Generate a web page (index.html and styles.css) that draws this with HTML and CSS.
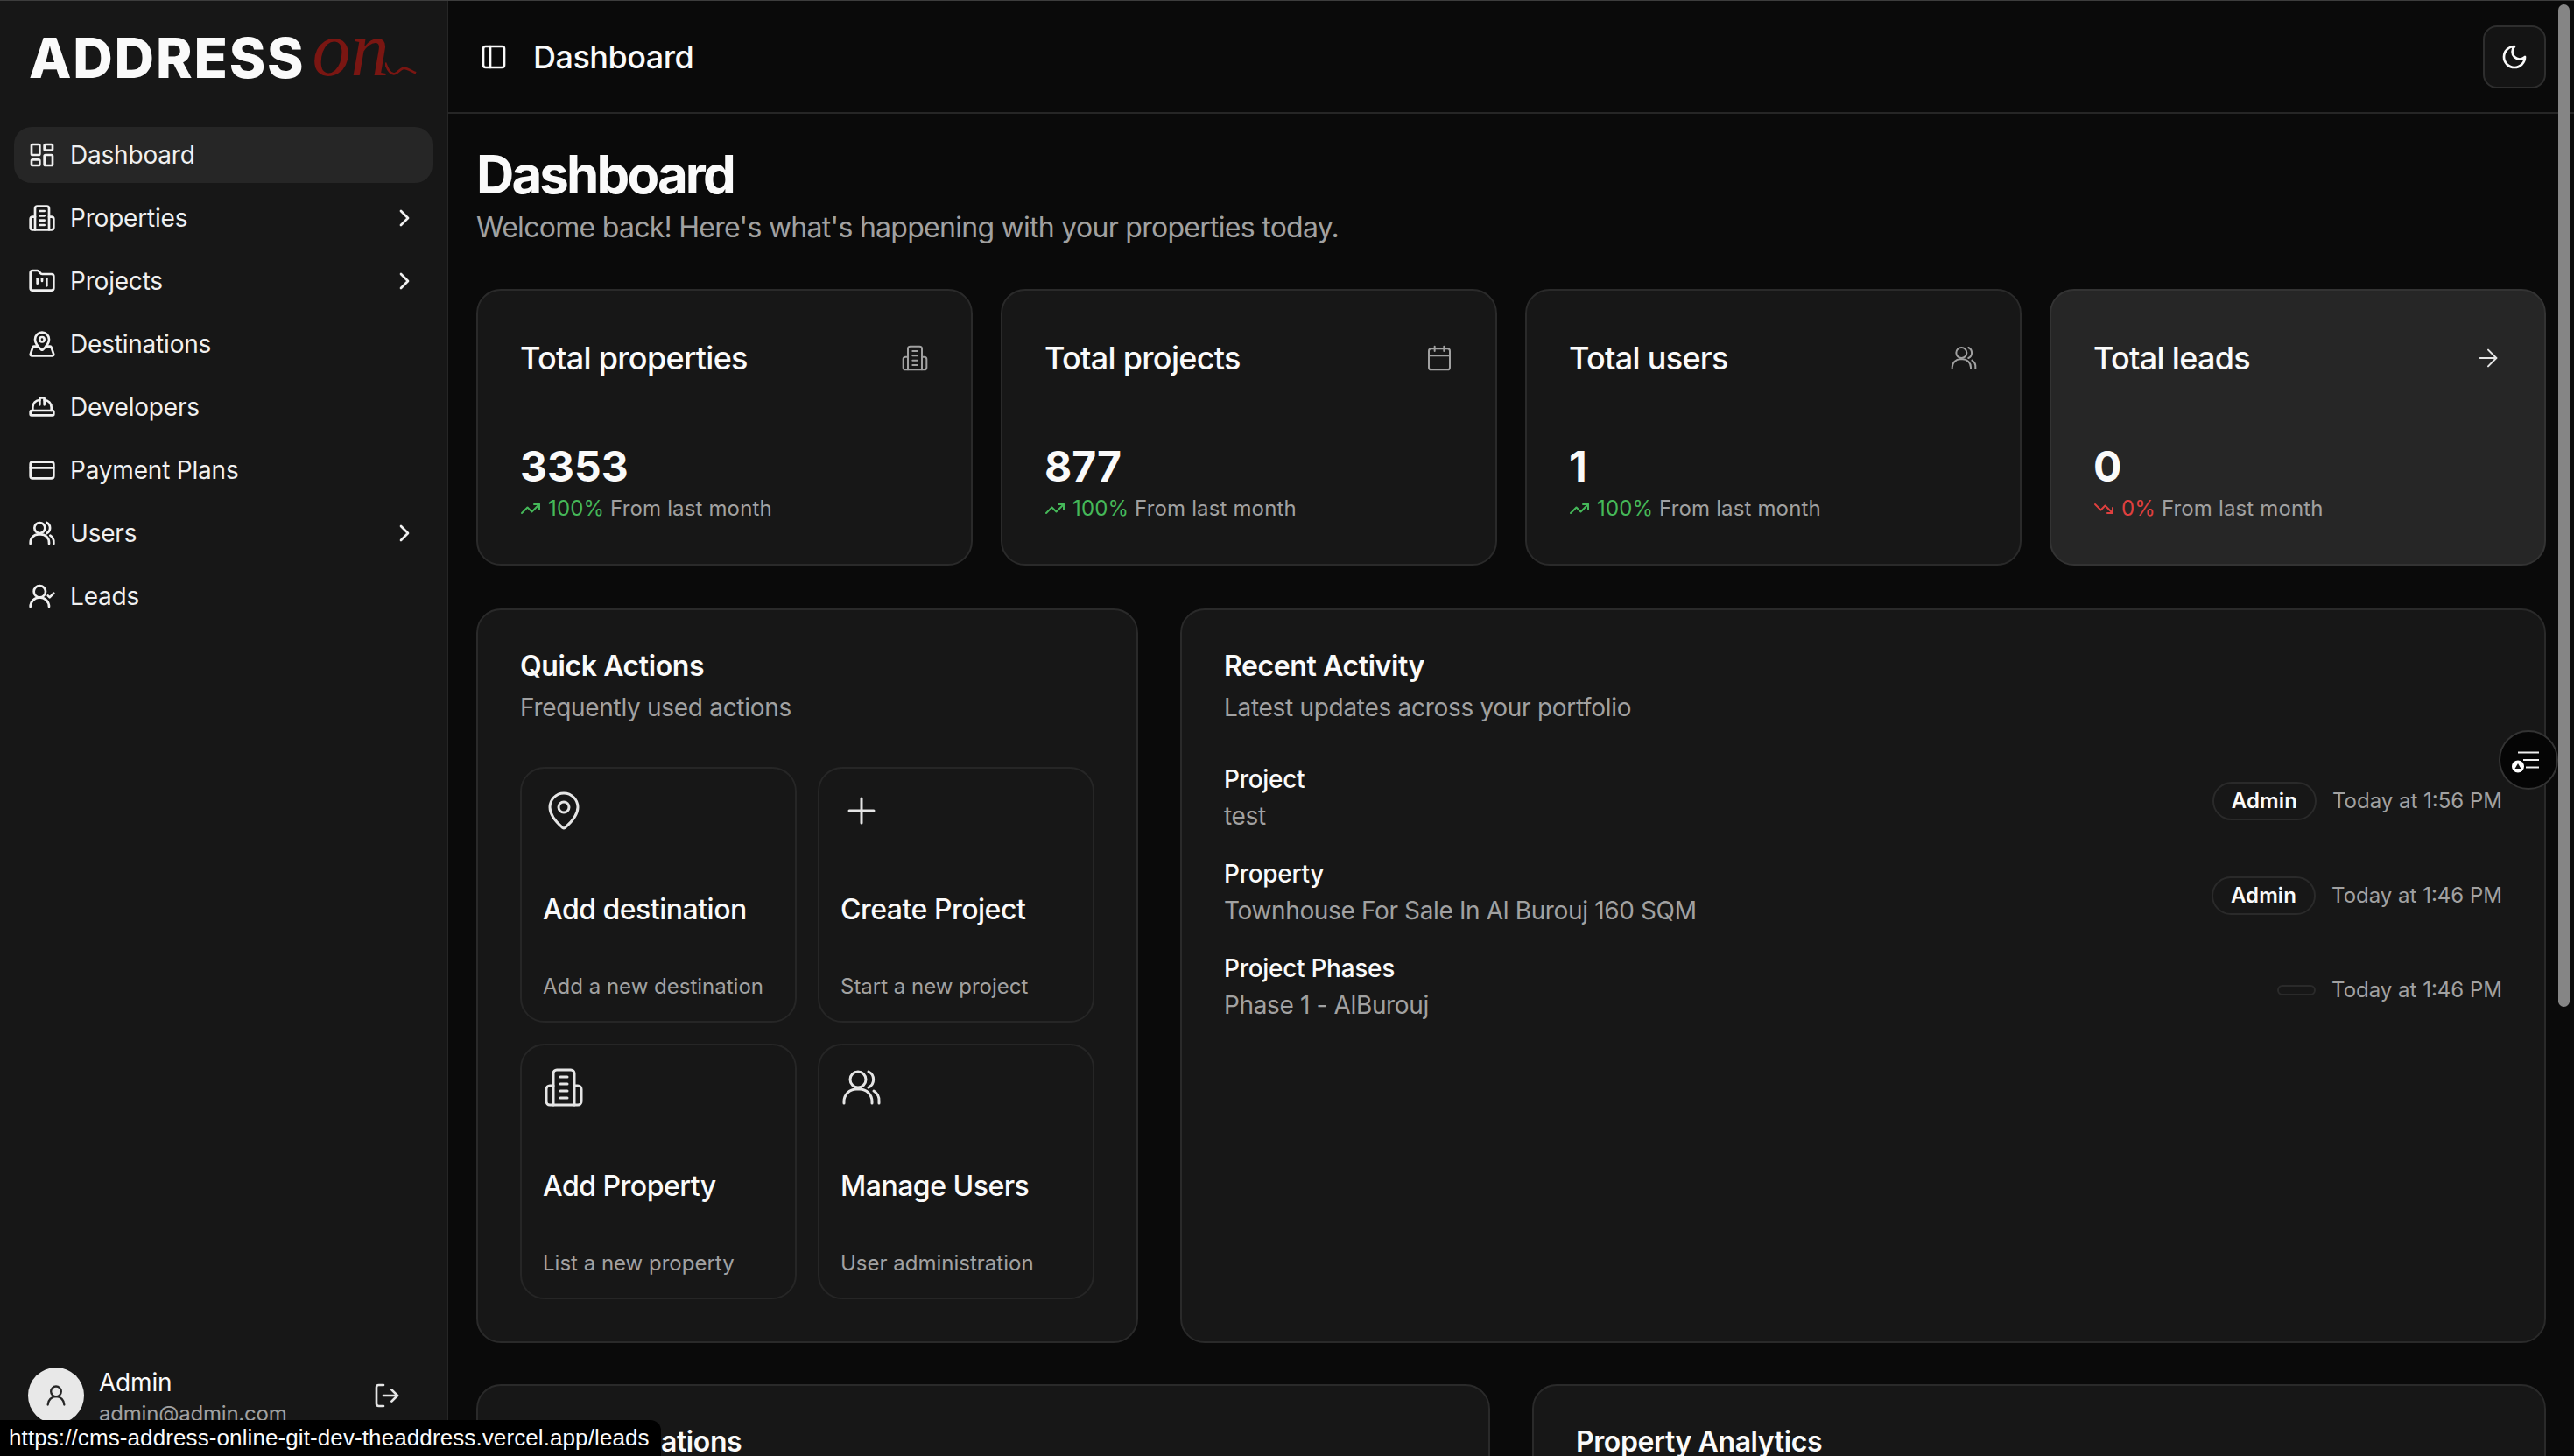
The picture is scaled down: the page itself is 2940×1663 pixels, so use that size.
FILE: index.html
```html
<!DOCTYPE html>
<html lang="en">
<head>
    <meta charset="UTF-8">
    <meta name="viewport" content="width=device-width, initial-scale=1.0">
    <title>Dashboard</title>
    <link rel="stylesheet" href="styles.css">
</head>
<body>

<svg class="icon-defs" width="0" height="0">
    <symbol id="i-dashboard" viewBox="0 0 24 24"><rect x="3" y="3" width="7" height="9" rx="1"/><rect x="14" y="3" width="7" height="5" rx="1"/><rect x="14" y="12" width="7" height="9" rx="1"/><rect x="3" y="16" width="7" height="5" rx="1"/></symbol>
    <symbol id="i-building" viewBox="0 0 24 24"><path d="M6 22V4a2 2 0 0 1 2-2h8a2 2 0 0 1 2 2v18Z"/><path d="M6 11H4a2 2 0 0 0-2 2v7a2 2 0 0 0 2 2h2"/><path d="M18 11h2a2 2 0 0 1 2 2v7a2 2 0 0 1-2 2h-2"/><path d="M10 6h4"/><path d="M10 10h4"/><path d="M10 14h4"/><path d="M10 18h4"/></symbol>
    <symbol id="i-folder" viewBox="0 0 24 24"><path d="M4 20h16a2 2 0 0 0 2-2V8a2 2 0 0 0-2-2h-7.93a2 2 0 0 1-1.66-.9l-.82-1.2A2 2 0 0 0 7.93 3H4a2 2 0 0 0-2 2v13c0 1.1.9 2 2 2Z"/><path d="M8 10v4"/><path d="M12 10v2"/><path d="M16 10v6"/></symbol>
    <symbol id="i-map" viewBox="0 0 24 24"><path d="M18 8c0 3.613-3.869 7.429-5.393 8.795a1 1 0 0 1-1.214 0C9.87 15.429 6 11.613 6 8a6 6 0 0 1 12 0"/><circle cx="12" cy="8" r="2"/><path d="M8.714 14h-3.71a1 1 0 0 0-.948.683l-2.004 6A1 1 0 0 0 3 22h18a1 1 0 0 0 .948-1.316l-2-6a1 1 0 0 0-.949-.684h-3.712"/></symbol>
    <symbol id="i-hat" viewBox="0 0 24 24"><path d="M10 10V5a1 1 0 0 1 1-1h2a1 1 0 0 1 1 1v5"/><path d="M14 6a6 6 0 0 1 6 6v3"/><path d="M4 15v-3a6 6 0 0 1 6-6"/><rect x="2" y="15" width="20" height="4" rx="1"/></symbol>
    <symbol id="i-card" viewBox="0 0 24 24"><rect x="2" y="5" width="20" height="14" rx="2"/><line x1="2" y1="10" x2="22" y2="10"/></symbol>
    <symbol id="i-users" viewBox="0 0 24 24"><path d="M2 21v-1a7 7 0 0 1 7-7h2a7 7 0 0 1 7 7v1"/><circle cx="10" cy="7.5" r="4.5"/><path d="M16 3a5 5 0 0 1 0 9"/><path d="M19 14a6.500 6.500 0 0 1 3 6v1"/></symbol>
    <symbol id="i-user-check" viewBox="0 0 24 24"><path d="M2 21a8 8 0 0 1 16 0"/><circle cx="10" cy="8" r="5"/><path d="m17 11.500 1.500 1.500 3.500-3.500"/></symbol>
    <symbol id="i-chevron" viewBox="0 0 24 24"><path d="m9 18 6-6-6-6"/></symbol>
    <symbol id="i-panel" viewBox="0 0 24 24"><rect x="3" y="3" width="18" height="18" rx="2"/><path d="M9 3v18"/></symbol>
    <symbol id="i-moon" viewBox="0 0 24 24"><path d="M12 3a6 6 0 0 0 9 9 9 9 0 1 1-9-9Z"/></symbol>
    <symbol id="i-calendar" viewBox="0 0 24 24"><path d="M8 2v4"/><path d="M16 2v4"/><rect x="3" y="4" width="18" height="18" rx="2"/><path d="M3 10h18"/></symbol>
    <symbol id="i-arrow" viewBox="0 0 24 24"><path d="M5 12h14"/><path d="m12 5 7 7-7 7"/></symbol>
    <symbol id="i-up" viewBox="0 0 24 24"><path d="M22 7 13.500 15.500 8.500 10.500 2 17"/><path d="M16 7h6v6"/></symbol>
    <symbol id="i-down" viewBox="0 0 24 24"><path d="M22 17 13.500 8.500 8.500 13.500 2 7"/><path d="M16 17h6v-6"/></symbol>
    <symbol id="i-pin" viewBox="0 0 24 24"><path d="M20 10c0 4.993-5.539 10.193-7.399 11.799a1 1 0 0 1-1.202 0C9.539 20.193 4 14.993 4 10a8 8 0 0 1 16 0"/><circle cx="12" cy="10" r="3"/></symbol>
    <symbol id="i-plus" viewBox="0 0 24 24"><path d="M5 12h14"/><path d="M12 5v14"/></symbol>
    <symbol id="i-logout" viewBox="0 0 24 24"><path d="M9 21H5a2 2 0 0 1-2-2V5a2 2 0 0 1 2-2h4"/><path d="m16 17 5-5-5-5"/><path d="M21 12H9"/></symbol>
    <symbol id="i-user" viewBox="0 0 24 24"><circle cx="12" cy="8" r="5"/><path d="M20 21a8 8 0 0 0-16 0"/></symbol>
</svg>

<div class="app">
    <aside class="sidebar">
        <div class="logo">
            <span class="logo-word">ADDRESS</span>
            <span class="logo-on">on</span>
            <svg class="logo-tail" viewBox="0 0 40 24"><path d="M0 6c3 9 7 15 12 14 5-1 6-6 11-7 5-1 10 4 16 6"/></svg>
        </div>

        <nav class="nav">
            <a class="nav-item active"><svg class="icon"><use href="#i-dashboard"/></svg><span>Dashboard</span></a>
            <a class="nav-item"><svg class="icon"><use href="#i-building"/></svg><span>Properties</span><svg class="icon chevron"><use href="#i-chevron"/></svg></a>
            <a class="nav-item"><svg class="icon"><use href="#i-folder"/></svg><span>Projects</span><svg class="icon chevron"><use href="#i-chevron"/></svg></a>
            <a class="nav-item"><svg class="icon"><use href="#i-map"/></svg><span>Destinations</span></a>
            <a class="nav-item"><svg class="icon"><use href="#i-hat"/></svg><span>Developers</span></a>
            <a class="nav-item"><svg class="icon"><use href="#i-card"/></svg><span>Payment Plans</span></a>
            <a class="nav-item"><svg class="icon"><use href="#i-users"/></svg><span>Users</span><svg class="icon chevron"><use href="#i-chevron"/></svg></a>
            <a class="nav-item"><svg class="icon"><use href="#i-user-check"/></svg><span>Leads</span></a>
        </nav>

        <div class="user-box">
            <div class="avatar"><svg class="icon"><use href="#i-user"/></svg></div>
            <div class="user-text">
                <div class="user-name">Admin</div>
                <div class="user-mail">admin@admin.com</div>
            </div>
            <svg class="icon logout"><use href="#i-logout"/></svg>
        </div>
    </aside>

    <main class="main">
        <header class="topbar">
            <svg class="icon"><use href="#i-panel"/></svg>
            <div class="topbar-title">Dashboard</div>
            <button class="theme-btn"><svg class="icon"><use href="#i-moon"/></svg></button>
        </header>

        <div class="content">
            <h1 class="page-title">Dashboard</h1>
            <p class="page-sub">Welcome back! Here's what's happening with your properties today.</p>

            <section class="stats">
                <div class="stat-card">
                    <div class="stat-head"><span>Total properties</span><svg class="icon"><use href="#i-building"/></svg></div>
                    <div class="stat-value">3353</div>
                    <div class="stat-note"><svg class="icon-sm good"><use href="#i-up"/></svg><span class="good">100%</span> From last month</div>
                </div>
                <div class="stat-card">
                    <div class="stat-head"><span>Total projects</span><svg class="icon"><use href="#i-calendar"/></svg></div>
                    <div class="stat-value">877</div>
                    <div class="stat-note"><svg class="icon-sm good"><use href="#i-up"/></svg><span class="good">100%</span> From last month</div>
                </div>
                <div class="stat-card">
                    <div class="stat-head"><span>Total users</span><svg class="icon"><use href="#i-users"/></svg></div>
                    <div class="stat-value">1</div>
                    <div class="stat-note"><svg class="icon-sm good"><use href="#i-up"/></svg><span class="good">100%</span> From last month</div>
                </div>
                <div class="stat-card hovered">
                    <div class="stat-head"><span>Total leads</span><svg class="icon arrow"><use href="#i-arrow"/></svg></div>
                    <div class="stat-value">0</div>
                    <div class="stat-note"><svg class="icon-sm bad"><use href="#i-down"/></svg><span class="bad">0%</span> From last month</div>
                </div>
            </section>

            <section class="panels">
                <div class="panel">
                    <h2 class="panel-title">Quick Actions</h2>
                    <p class="panel-sub">Frequently used actions</p>
                    <div class="actions">
                        <div class="action"><svg class="icon-lg"><use href="#i-pin"/></svg><div class="action-title">Add destination</div><div class="action-sub">Add a new destination</div></div>
                        <div class="action"><svg class="icon-lg"><use href="#i-plus"/></svg><div class="action-title">Create Project</div><div class="action-sub">Start a new project</div></div>
                        <div class="action"><svg class="icon-lg"><use href="#i-building"/></svg><div class="action-title">Add Property</div><div class="action-sub">List a new property</div></div>
                        <div class="action"><svg class="icon-lg"><use href="#i-users"/></svg><div class="action-title">Manage Users</div><div class="action-sub">User administration</div></div>
                    </div>
                </div>

                <div class="panel wide">
                    <h2 class="panel-title">Recent Activity</h2>
                    <p class="panel-sub">Latest updates across your portfolio</p>
                    <div class="activity">
                        <div class="row">
                            <div><div class="row-label">Project</div><div class="row-sub">test</div></div>
                            <div class="row-meta"><span class="badge">Admin</span><span class="row-time">Today at 1:56 PM</span></div>
                        </div>
                        <div class="row">
                            <div><div class="row-label">Property</div><div class="row-sub">Townhouse For Sale In Al Burouj 160 SQM</div></div>
                            <div class="row-meta"><span class="badge">Admin</span><span class="row-time">Today at 1:46 PM</span></div>
                        </div>
                        <div class="row">
                            <div><div class="row-label">Project Phases</div><div class="row-sub">Phase 1 - AlBurouj</div></div>
                            <div class="row-meta"><span class="badge empty"></span><span class="row-time">Today at 1:46 PM</span></div>
                        </div>
                    </div>
                </div>
            </section>

            <section class="bottom">
                <div class="panel"><h2 class="panel-title">Top Destinations</h2></div>
                <div class="panel"><h2 class="panel-title">Property Analytics</h2></div>
            </section>
        </div>
    </main>
</div>

<!-- overlays -->
<div class="scroll-thumb"></div>
<button class="float-btn">
    <svg viewBox="0 0 34 30" width="34" height="30">
        <path class="float-lines" d="M8 6.500h24M14 15h18M17 23.500h15"/>
        <circle class="float-dot" cx="8" cy="22.500" r="7"/>
        <path class="float-tri" d="M8 19l3.500 6h-7z"/>
    </svg>
</button>
<div class="status-link">https://cms-address-online-git-dev-theaddress.vercel.app/leads</div>

</body>
</html>
```

FILE: styles.css
```css
* {
    box-sizing: border-box;
}
html, body {
    margin: 0;
    height: 1663px;
    overflow: hidden;
}
body {
    font-family: Inter, "Noto Sans", sans-serif;
    background-color: #0a0a0a;
    color: #fafafa;
    border-top: 1px solid #3d3d3d;
    position: relative;
}
h1, h2, p {
    margin: 0;
}
.icon-defs {
    position: absolute;
}
.icon, .icon-sm, .icon-lg {
    fill: none;
    stroke: currentColor;
    stroke-width: 2;
    stroke-linecap: round;
    stroke-linejoin: round;
    flex-shrink: 0;
}
.icon {
    width: 32px;
    height: 32px;
}
.icon-sm {
    width: 24px;
    height: 24px;
}
.icon-lg {
    width: 48px;
    height: 48px;
    stroke-width: 1.5;
    color: #e5e5e5;
    display: block;
}
.app {
    display: flex;
    height: 1662px;
}

/* sidebar */
.sidebar {
    width: 512px;
    flex-shrink: 0;
    background-color: #171717;
    border-right: 2px solid #262626;
    display: flex;
    flex-direction: column;
    padding: 0 16px 30px;
}
.logo {
    height: 144px;
    display: flex;
    align-items: center;
    padding: 0 0 14px 17px;
}
.logo-word {
    font-size: 63px;
    font-weight: 800;
    letter-spacing: 1.8px;
    line-height: 1;
}
.logo-on {
    font-family: "Liberation Serif", serif;
    font-style: italic;
    font-size: 88px;
    line-height: 1;
    color: #7a1612;
    margin: -18px 0 0 8px;
}
.logo-tail {
    width: 36px;
    height: 22px;
    margin: 22px 0 0 -4px;
    fill: none;
    stroke: #7a1612;
    stroke-width: 3;
}
.nav {
    display: flex;
    flex-direction: column;
    gap: 8px;
}
.nav-item {
    display: flex;
    align-items: center;
    gap: 16px;
    height: 64px;
    padding: 0 16px;
    border-radius: 20px;
    font-size: 28px;
    letter-spacing: -0.2px;
    color: #f0f0f0;
}
.nav-item.active {
    background-color: #262626;
}
.chevron {
    margin-left: auto;
}
.user-box {
    margin-top: auto;
    display: flex;
    align-items: center;
    padding-left: 16px;
}
.avatar {
    width: 64px;
    height: 64px;
    border-radius: 50%;
    background-color: #e8e8e8;
    color: #262626;
    display: flex;
    align-items: center;
    justify-content: center;
}
.avatar .icon {
    width: 28px;
    height: 28px;
}
.user-text {
    margin: 6px 0 0 17px;
    letter-spacing: -0.2px;
}
.user-name {
    font-size: 28px;
    line-height: 36px;
}
.user-mail {
    font-size: 24px;
    line-height: 36px;
    color: #a1a1a1;
}
.logout {
    margin-left: auto;
    margin-right: 36px;
    color: #e5e5e5;
}

/* main area */
.main {
    flex: 1;
    min-width: 0;
}
.topbar {
    height: 129px;
    border-bottom: 2px solid #262626;
    display: flex;
    align-items: center;
    padding: 0 32px 0 36px;
}
.topbar-title {
    margin-left: 29px;
    font-size: 36px;
    font-weight: 500;
    letter-spacing: -0.5px;
}
.theme-btn {
    margin-left: auto;
    width: 72px;
    height: 72px;
    border: 2px solid #2e2e2e;
    border-radius: 16px;
    background-color: #141414;
    color: #fafafa;
    display: flex;
    align-items: center;
    justify-content: center;
    padding: 0;
}
.content {
    padding: 33px 32px 0;
}
.page-title {
    font-size: 60px;
    line-height: 72px;
    font-weight: 700;
    letter-spacing: -2.9px;
}
.page-sub {
    font-size: 32px;
    line-height: 48px;
    letter-spacing: -0.72px;
    color: #a1a1a1;
    margin-top: 1px;
}
.stats {
    margin-top: 46px;
    display: grid;
    grid-template-columns: repeat(4, 1fr);
    gap: 32px;
}
.stat-card {
    height: 316px;
    padding: 49px 48px 0;
    background-color: #171717;
    border: 2px solid #2a2a2a;
    border-radius: 28px;
}
.stat-card.hovered {
    background-color: #262626;
    border-color: #333;
}
.stat-head {
    height: 56px;
    display: flex;
    align-items: center;
    justify-content: space-between;
    font-size: 36px;
    font-weight: 500;
    letter-spacing: -0.7px;
}
.stat-head .icon {
    color: #a1a1a1;
    stroke-width: 1.5;
}
.stat-head .arrow {
    color: #e5e5e5;
}
.stat-value {
    margin-top: 64px;
    font-size: 48px;
    line-height: 64px;
    font-weight: 700;
}
.stat-note {
    display: flex;
    align-items: center;
    font-size: 24px;
    line-height: 32px;
    letter-spacing: 0.15px;
    color: #a1a1a1;
    white-space: pre;
}
.stat-note svg {
    margin-right: 8px;
}
.good {
    color: #45b859;
}
.bad {
    color: #e0403f;
}

/* panels */
.panels {
    margin-top: 49px;
    display: grid;
    grid-template-columns: repeat(3, 1fr);
    gap: 48px;
}
.panel {
    padding: 48px;
    background-color: #171717;
    border: 2px solid #2a2a2a;
    border-radius: 28px;
}
.panel.wide {
    grid-column: span 2;
}
.panel-title {
    font-size: 32px;
    line-height: 32px;
    font-weight: 600;
    letter-spacing: -0.4px;
}
.panel-sub {
    margin-top: 11px;
    font-size: 28px;
    line-height: 40px;
    letter-spacing: -0.3px;
    color: #a1a1a1;
}
.actions {
    margin-top: 48px;
    display: grid;
    grid-template-columns: 1fr 1fr;
    gap: 24px;
}
.action {
    height: 292px;
    padding: 24px;
    border: 2px solid #262626;
    border-radius: 28px;
}
.action-title {
    margin-top: 69px;
    font-size: 32px;
    line-height: 40px;
    font-weight: 500;
    letter-spacing: -0.5px;
}
.action-sub {
    margin-top: 52px;
    font-size: 24px;
    line-height: 32px;
    color: #a1a1a1;
}
.activity {
    margin-top: 41px;
    display: flex;
    flex-direction: column;
    gap: 24px;
    height: 596px;
}
.row {
    display: flex;
    align-items: center;
    justify-content: space-between;
}
.row-label {
    font-size: 28px;
    line-height: 42px;
    font-weight: 500;
    letter-spacing: -0.3px;
}
.row-sub {
    font-size: 28px;
    line-height: 42px;
    letter-spacing: -0.36px;
    color: #a1a1a1;
}
.row-meta {
    display: flex;
    align-items: center;
    gap: 18px;
    margin-top: 8px;
}
.badge {
    border: 2px solid #2a2a2a;
    border-radius: 999px;
    padding: 4px 20px;
    min-height: 12px;
    font-size: 24px;
    line-height: 32px;
    font-weight: 600;
    letter-spacing: 0.1px;
}
.badge.empty {
    width: 44px;
    height: 12px;
    padding: 0;
}
.row-time {
    font-size: 24px;
    line-height: 32px;
    color: #a1a1a1;
}
.bottom {
    margin-top: 47px;
    display: grid;
    grid-template-columns: 1fr 1fr;
    gap: 48px;
}

/* overlays */
.scroll-thumb {
    position: absolute;
    top: 4px;
    right: 5px;
    width: 13px;
    height: 1145px;
    border-radius: 7px;
    background-color: #858585;
}
.float-btn {
    position: absolute;
    top: 833px;
    left: 2854px;
    width: 68px;
    height: 68px;
    border-radius: 50%;
    border: 2px solid #333;
    background-color: #050505;
    padding: 0 6px 0 0;
    display: flex;
    align-items: center;
    justify-content: center;
}
.float-lines {
    fill: none;
    stroke: #f0f0f0;
    stroke-width: 2;
}
.float-dot {
    fill: #fff;
}
.float-tri {
    fill: #111;
}
.status-link {
    position: absolute;
    left: 0;
    bottom: 0;
    width: 755px;
    height: 41px;
    padding-left: 10px;
    background-color: #000;
    border-top-right-radius: 12px;
    font-family: "Liberation Sans", Arial, sans-serif;
    font-size: 26px;
    letter-spacing: 0.1px;
    line-height: 41px;
    color: #fafafa;
    white-space: nowrap;
}
```
